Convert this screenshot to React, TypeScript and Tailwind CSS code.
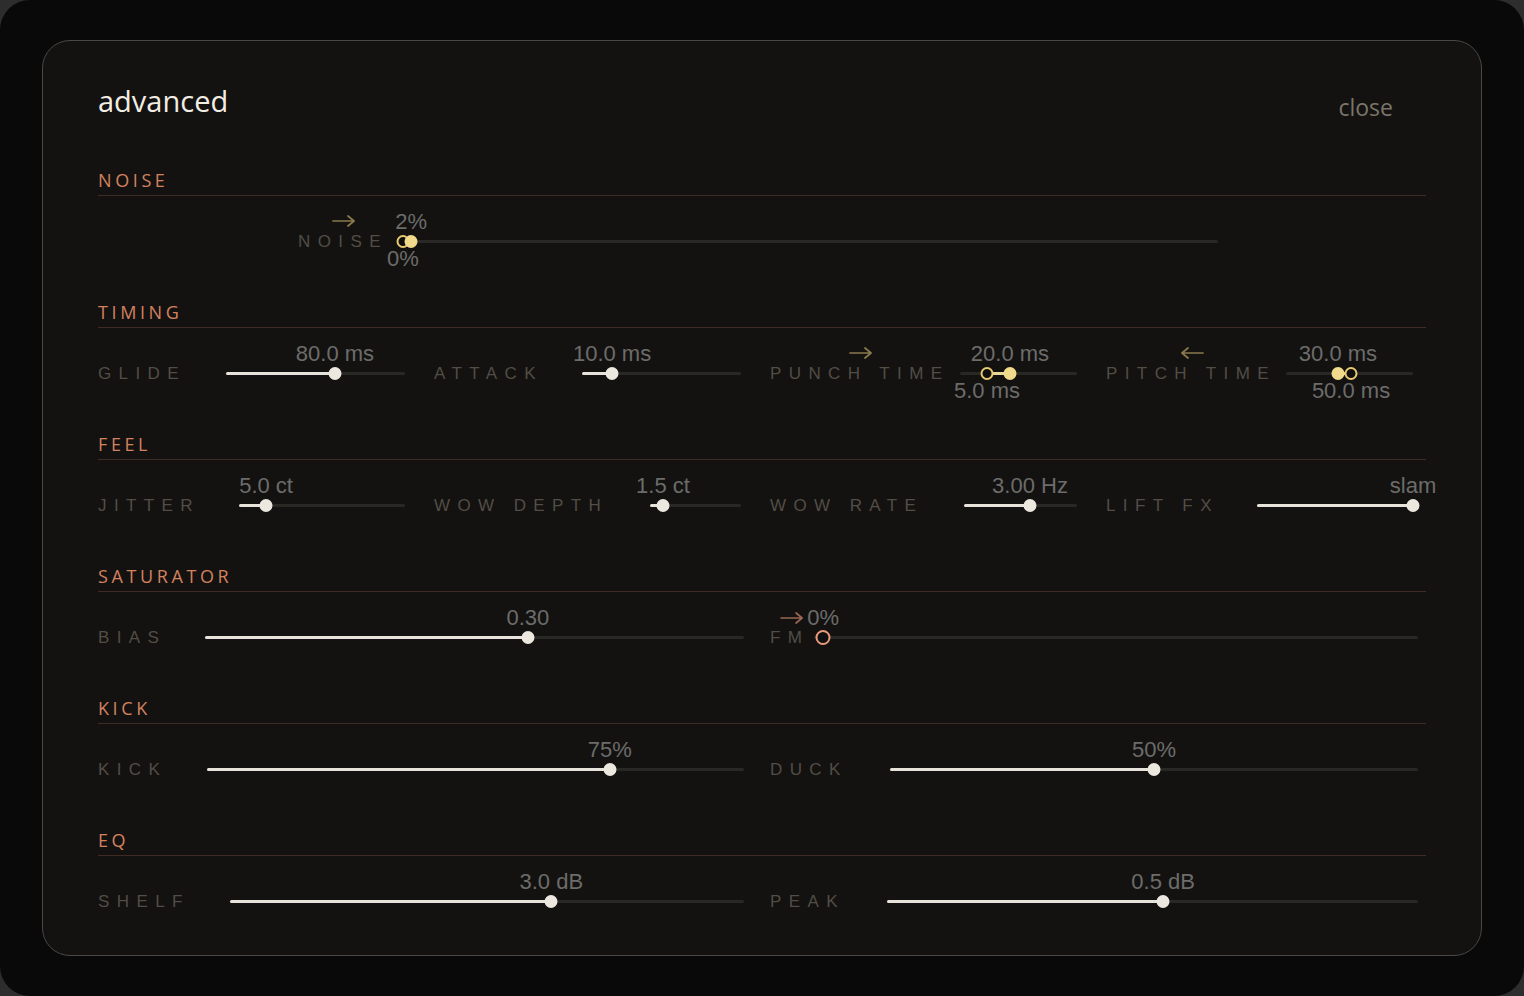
import React from "react";

type Item = {
  label: string;
  labelW: string;
  sliderW: number;
  pct?: number;
  value?: string;
  arrow?: "right" | "left";
  range?: { hollow: number; filled: number; hollowValue: string; filledValue: string };
  fm?: boolean;
};

const sans = { fontFamily: '"Liberation Sans", Arial, sans-serif' };

function Arrow({ dir, className }: { dir: "right" | "left"; className: string }) {
  return (
    <svg width="24" height="12" viewBox="0 0 24 12" className={className} fill="none">
      {dir === "right" ? (
        <path d="M1 6 H22 M16 1 L22 6 L16 11" stroke="currentColor" strokeWidth="1.7" strokeLinecap="round" strokeLinejoin="round" />
      ) : (
        <path d="M23 6 H2 M8 1 L2 6 L8 11" stroke="currentColor" strokeWidth="1.7" strokeLinecap="round" strokeLinejoin="round" />
      )}
    </svg>
  );
}

function Slider({ item }: { item: Item }) {
  const { sliderW, pct = 0, value, range, fm } = item;
  return (
    <div className="relative h-6 flex-none" style={{ width: sliderW }}>
      {/* track */}
      <div className="absolute left-0 right-0 top-[11px] h-[3px] rounded-full bg-[#2a2825]" />
      {!range && !fm && (
        <div className="absolute left-0 top-[11px] h-[3px] rounded-full bg-[#e7e3da]" style={{ width: `${pct * 100}%` }} />
      )}
      {range && (
        <div
          className="absolute top-[11px] h-[3px] bg-[#e9d79a]"
          style={{
            left: `${Math.min(range.hollow, range.filled) * 100}%`,
            width: `${Math.abs(range.filled - range.hollow) * 100}%`,
          }}
        />
      )}

      {/* thumbs */}
      {!range && !fm && (
        <div className="absolute top-[6px] h-[13px] w-[13px] -translate-x-1/2 rounded-full bg-[#ece8df]" style={{ left: `${pct * 100}%` }} />
      )}
      {fm && (
        <div className="absolute top-[5px] h-[15px] w-[15px] -translate-x-1/2 rounded-full border-[2.5px] border-[#e99a7c] bg-[#101010]" style={{ left: `${pct * 100}%` }} />
      )}
      {range && (
        <>
          <div className="absolute top-[6px] h-[13px] w-[13px] -translate-x-1/2 rounded-full border-2 border-[#e8cb70] bg-[#0f0f0e]" style={{ left: `${range.hollow * 100}%` }} />
          <div className="absolute top-[6px] h-[13px] w-[13px] -translate-x-1/2 rounded-full bg-[#f1da8c]" style={{ left: `${range.filled * 100}%` }} />
        </>
      )}

      {/* values */}
      {value && (
        <div
          className="absolute top-[-17px] -translate-x-1/2 whitespace-nowrap text-[22px] leading-5 text-[#6c6c6a]"
          style={{ ...sans, left: `${pct * 100}%` }}
        >
          {fm && <Arrow dir="right" className="absolute right-full top-[4px] mr-[3px] text-[#9a6653]" />}
          {value}
        </div>
      )}
      {range && (
        <>
          <div
            className="absolute top-[-17px] -translate-x-1/2 whitespace-nowrap text-[22px] leading-5 text-[#6c6c6a]"
            style={{ ...sans, left: `${range.filled * 100}%` }}
          >
            {range.filledValue}
          </div>
          <div
            className="absolute top-[20px] -translate-x-1/2 whitespace-nowrap text-[22px] leading-5 text-[#6c6c6a]"
            style={{ ...sans, left: `${range.hollow * 100}%` }}
          >
            {range.hollowValue}
          </div>
        </>
      )}
    </div>
  );
}

function Control({ item }: { item: Item }) {
  return (
    <div className="flex h-6 items-center">
      <div className={`relative flex-none ${item.labelW}`}>
        <span className="whitespace-nowrap text-[17px] leading-6 tracking-[7.4px] text-[#524d45]" style={sans}>
          {item.label}
        </span>
        {item.arrow && (
          <div className="absolute left-0 right-2 top-[-14px] flex justify-center">
            <Arrow dir={item.arrow} className="text-[#8a7a4c]" />
          </div>
        )}
      </div>
      <Slider item={item} />
    </div>
  );
}

function Section({ title, children }: { title: string; children: React.ReactNode }) {
  return (
    <section>
      <h2
        className="border-b border-[#3e2c24] pb-[3px] text-[18px] leading-6 tracking-[3.6px] text-[#d4815f]"
        style={{ fontFamily: '"Open Sans", "Noto Sans", sans-serif' }}
      >
        {title}
      </h2>
      <div className="h-[104px] pt-[33px]">{children}</div>
    </section>
  );
}

const timing: Item[] = [
  { label: "GLIDE", labelW: "w-[128px]", sliderW: 179, pct: 0.609, value: "80.0 ms" },
  { label: "ATTACK", labelW: "w-[148px]", sliderW: 159, pct: 0.189, value: "10.0 ms" },
  {
    label: "PUNCH TIME",
    labelW: "w-[190px]",
    sliderW: 117,
    arrow: "right",
    range: { hollow: 0.231, filled: 0.427, hollowValue: "5.0 ms", filledValue: "20.0 ms" },
  },
  {
    label: "PITCH TIME",
    labelW: "w-[180px]",
    sliderW: 127,
    arrow: "left",
    range: { hollow: 0.512, filled: 0.409, hollowValue: "50.0 ms", filledValue: "30.0 ms" },
  },
];

const feel: Item[] = [
  { label: "JITTER", labelW: "w-[141px]", sliderW: 166, pct: 0.163, value: "5.0 ct" },
  { label: "WOW DEPTH", labelW: "w-[216px]", sliderW: 91, pct: 0.143, value: "1.5 ct" },
  { label: "WOW RATE", labelW: "w-[194px]", sliderW: 113, pct: 0.584, value: "3.00 Hz" },
  { label: "LIFT FX", labelW: "w-[151px]", sliderW: 162, pct: 0.963, value: "slam" },
];

const saturator: Item[] = [
  { label: "BIAS", labelW: "w-[107px]", sliderW: 539, pct: 0.599, value: "0.30" },
  { label: "FM", labelW: "w-[44px]", sliderW: 604, pct: 0.015, value: "0%", fm: true },
];

const kick: Item[] = [
  { label: "KICK", labelW: "w-[109px]", sliderW: 537, pct: 0.75, value: "75%" },
  { label: "DUCK", labelW: "w-[120px]", sliderW: 528, pct: 0.5, value: "50%" },
];

const eq: Item[] = [
  { label: "SHELF", labelW: "w-[132px]", sliderW: 514, pct: 0.625, value: "3.0 dB" },
  { label: "PEAK", labelW: "w-[117px]", sliderW: 531, pct: 0.52, value: "0.5 dB" },
];

const noise: Item = {
  label: "NOISE",
  labelW: "w-[100px]",
  sliderW: 820,
  arrow: "right",
  range: { hollow: 0.006, filled: 0.016, hollowValue: "0%", filledValue: "2%" },
};

function Row({ cols, items }: { cols: "grid-cols-4" | "grid-cols-2"; items: Item[] }) {
  return (
    <div className={`grid gap-x-4 ${cols}`}>
      {items.map((it) => (
        <Control key={it.label} item={it} />
      ))}
    </div>
  );
}

export default function App() {
  return (
    <div className="h-[996px] w-[1524px] overflow-hidden bg-[#2d2d2d]">
      <div className="h-full w-full rounded-[30px] bg-[#090909] pl-[42px] pt-[40px]">
        <div className="h-[916px] w-[1440px] rounded-[28px] border border-[#4b4946] bg-[#131211] px-[55px] pt-[40px]">
          {/* Header */}
          <div className="flex h-[40px] items-center justify-between" style={{ fontFamily: '"Open Sans", "Noto Sans", sans-serif' }}>
            <h1 className="text-[29px] leading-10 text-[#f2ede3]">advanced</h1>
            <button className="mr-[33px] mt-[12px] text-[23px] leading-8 text-[#7b7569]">close</button>
          </div>

          <div className="mt-[47px]">
            <Section title="NOISE">
              <div className="ml-[200px]">
                <Control item={noise} />
              </div>
            </Section>

            <Section title="TIMING">
              <Row cols="grid-cols-4" items={timing} />
            </Section>

            <Section title="FEEL">
              <Row cols="grid-cols-4" items={feel} />
            </Section>

            <Section title="SATURATOR">
              <Row cols="grid-cols-2" items={saturator} />
            </Section>

            <Section title="KICK">
              <Row cols="grid-cols-2" items={kick} />
            </Section>

            <Section title="EQ">
              <Row cols="grid-cols-2" items={eq} />
            </Section>
          </div>
        </div>
      </div>
    </div>
  );
}
